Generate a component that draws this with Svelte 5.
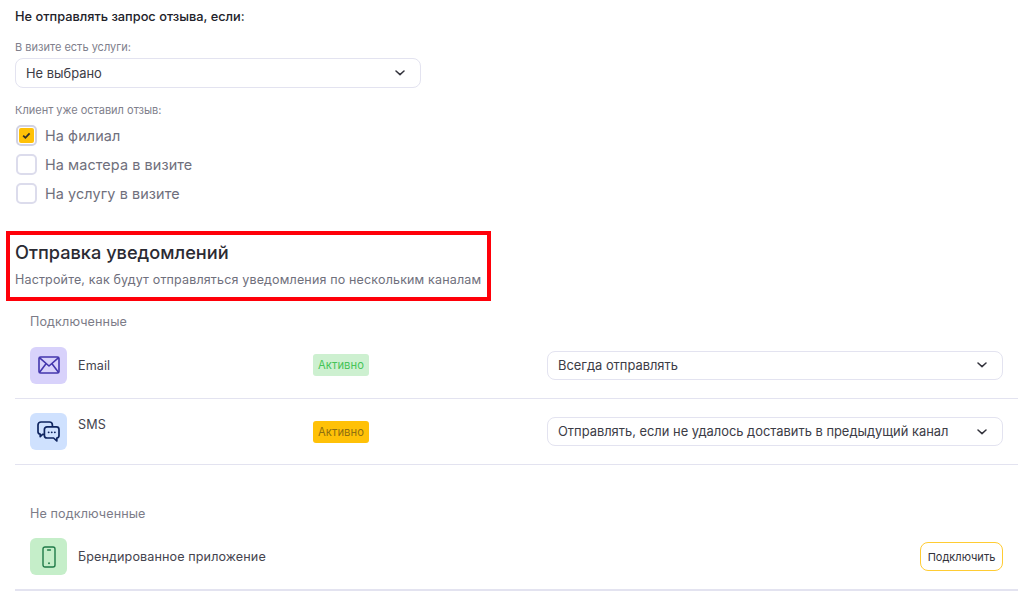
<script>
  const checks = [
    { label: 'На филиал', on: true },
    { label: 'На мастера в визите', on: false },
    { label: 'На услугу в визите', on: false },
  ];
</script>

{#snippet chevron()}
  <svg class="chev" width="10" height="6" viewBox="0 0 10 6" fill="none">
    <path d="M1 1l4 3.6L9 1" stroke="#33333c" stroke-width="1.5" stroke-linecap="round" stroke-linejoin="round" />
  </svg>
{/snippet}

<div class="page">
  <section class="filters">
    <h3>Не отправлять запрос отзыва, если:</h3>
    <div class="label first">В визите есть услуги:</div>
    <div class="select narrow">
      <span>Не выбрано</span>
      {@render chevron()}
    </div>
    <div class="label second">Клиент уже оставил отзыв:</div>
    <div class="checks">
      {#each checks as c}
        <div class="check">
          <span class="box" class:on={c.on}>
            {#if c.on}
              <svg width="15" height="15" viewBox="0 0 15 15">
                <rect width="15" height="15" rx="2" fill="#ffc107" />
                <path d="M4.2 7.6l2.2 2.2 4.2-4.4" fill="none" stroke="#33302a" stroke-width="1.8" />
              </svg>
            {/if}
          </span>
          <span>{c.label}</span>
        </div>
      {/each}
    </div>
  </section>

  <section class="head">
    <div class="marker"></div>
    <h2>Отправка уведомлений</h2>
    <p>Настройте, как будут отправляться уведомления по нескольким каналам</p>
  </section>

  <section class="channels">
    <div class="group">Подключенные</div>

    <div class="row email">
      <div class="icon violet">
        <svg width="22" height="18" viewBox="0 0 22 18" fill="none" stroke="#4336ad" stroke-width="1.6" stroke-linejoin="round">
          <rect x="1" y="1" width="20" height="16" rx="1.6" />
          <path d="M1.4 1.6L11 10l9.6-8.4M1.4 16.4l6.8-8.8M20.6 16.4l-6.8-8.8" />
        </svg>
      </div>
      <div class="name">Email</div>
      <div class="badge green">Активно</div>
      <div class="select">
        <span>Всегда отправлять</span>
        {@render chevron()}
      </div>
    </div>

    <div class="row sms">
      <div class="icon blue">
        <svg width="23" height="22" viewBox="0 0 23 22" fill="none" stroke="#0f2560" stroke-width="1.7" stroke-linejoin="round" stroke-linecap="round">
          <path d="M6.5 13.4H5.6l-2.4 2.2v-2.4A2.4 2.4 0 0 1 1 10.8V4a3 3 0 0 1 3-3h8.4a3 3 0 0 1 3 3v1.2" />
          <path d="M10 5.8h9.4a2.6 2.6 0 0 1 2.6 2.6v6a2.6 2.6 0 0 1-2.2 2.6v3l-3.2-3H10a2.6 2.6 0 0 1-2.6-2.6v-6A2.6 2.6 0 0 1 10 5.8z" />
          <path d="M11.6 11.3h.1M14.7 11.3h.1M17.8 11.3h.1" stroke-width="1.8" />
        </svg>
      </div>
      <div class="name">SMS</div>
      <div class="badge amber">Активно</div>
      <div class="select">
        <span>Отправлять, если не удалось доставить в предыдущий канал</span>
        {@render chevron()}
      </div>
    </div>

    <div class="group off">Не подключенные</div>

    <div class="row app">
      <div class="icon mint">
        <svg width="14" height="22" viewBox="0 0 14 22" fill="none" stroke="#1f7a48" stroke-width="1.4" stroke-linecap="round">
          <rect x="1" y="1" width="12" height="20" rx="2" />
          <path d="M5.6 4h2.8" />
          <path d="M7 17.2h.01" stroke-width="1.9" />
        </svg>
      </div>
      <div class="name">Брендированное приложение</div>
      <div></div>
      <div class="connect"><button>Подключить</button></div>
    </div>
  </section>
</div>

<style>
  :global(body) {
    margin: 0;
    background: #fff;
  }
  .page {
    width: 1024px;
    height: 594px;
    overflow: hidden;
    padding: 0 6px 0 15px;
    box-sizing: border-box;
    font-family: Inter, "Noto Sans", sans-serif;
    color: #33333c;
  }
  h3 {
    margin: 0;
    padding-top: 9px;
    font-size: 12.8px;
    line-height: 16px;
    font-weight: 500;
    color: #22222a;
  }
  .label {
    font-size: 11px;
    line-height: 14px;
    color: #80808c;
  }
  .label.first {
    margin-top: 15px;
  }
  .label.second {
    margin-top: 15px;
  }
  .select {
    display: flex;
    align-items: center;
    justify-content: space-between;
    height: 29px;
    box-sizing: border-box;
    padding: 0 15px 0 10px;
    border: 1px solid #e3e3f0;
    border-radius: 8px;
    font-size: 12.9px;
    color: #3c3c46;
    background: #fff;
  }
  .select.narrow {
    width: 406px;
    margin-top: 4px;
    height: 30px;
  }
  .chev {
    flex-shrink: 0;
  }
  .checks {
    display: flex;
    flex-direction: column;
    gap: 8px;
    margin-top: 8px;
  }
  .check {
    display: flex;
    align-items: center;
    gap: 8px;
    height: 21px;
    margin-left: 1px;
    font-size: 14.4px;
    letter-spacing: 0.1px;
    color: #6f6f7c;
  }
  .box {
    width: 21px;
    height: 21px;
    box-sizing: border-box;
    display: flex;
    align-items: center;
    justify-content: center;
    border: 2px solid #dcdcec;
    border-radius: 5px;
    background: #fff;
  }
  .box.on {
    border-color: #d2d2e2;
  }
  .head {
    position: relative;
    margin-top: 36px;
  }
  .marker {
    position: absolute;
    left: -9px;
    top: -9px;
    width: 485px;
    height: 70px;
    box-sizing: border-box;
    border: 4px solid #ff0009;
    pointer-events: none;
  }
  h2 {
    margin: 0;
    font-size: 18.2px;
    line-height: 24px;
    font-weight: 500;
    color: #2b2b33;
  }
  .head p {
    margin: 8px 0 0;
    font-size: 12.5px;
    line-height: 16px;
    letter-spacing: 0.16px;
    color: #6f6f7c;
  }
  .channels {
    margin-top: 26px;
  }
  .group {
    padding-left: 15px;
    font-size: 12.6px;
    line-height: 16px;
    letter-spacing: 0.1px;
    color: #7c7c88;
  }
  .group.off {
    margin-top: 41px;
  }
  .row {
    display: grid;
    grid-template-columns: 37px 246px 234px 456px;
    align-items: center;
    padding: 14px 15px;
    height: 66px;
    box-sizing: border-box;
    border-bottom: 1px solid #e3e3f0;
  }
  .row.email {
    margin-top: 2px;
    height: 67px;
  }
  .row.sms .name {
    align-self: start;
    margin-top: 4px;
  }
  .row.app {
    margin-top: 2px;
    height: 67px;
    border-bottom-width: 2px;
  }
  .icon {
    width: 37px;
    height: 37px;
    border-radius: 6px;
    display: flex;
    align-items: center;
    justify-content: center;
  }
  .violet { background: #d8d2fb; }
  .blue { background: #cfe1fe; }
  .mint { background: #c5eec9; }
  .name {
    padding-left: 11px;
    font-size: 12.6px;
    letter-spacing: 0.1px;
    color: #44444e;
  }
  .badge {
    width: 56px;
    height: 22px;
    box-sizing: border-box;
    border-radius: 3px;
    font-size: 11.2px;
    line-height: 22px;
    text-align: center;
    letter-spacing: 0.1px;
  }
  .green {
    background: #cdf0d0;
    color: #45c458;
  }
  .amber {
    background: #ffc107;
    color: #8f6f10;
  }
  .connect {
    display: flex;
    justify-content: flex-end;
  }
  button {
    width: 83px;
    height: 29px;
    padding: 0;
    border: 1.5px solid #ffcc33;
    border-radius: 8px;
    background: #fff;
    font-family: inherit;
    font-size: 11px;
    color: #33333c;
  }
</style>
